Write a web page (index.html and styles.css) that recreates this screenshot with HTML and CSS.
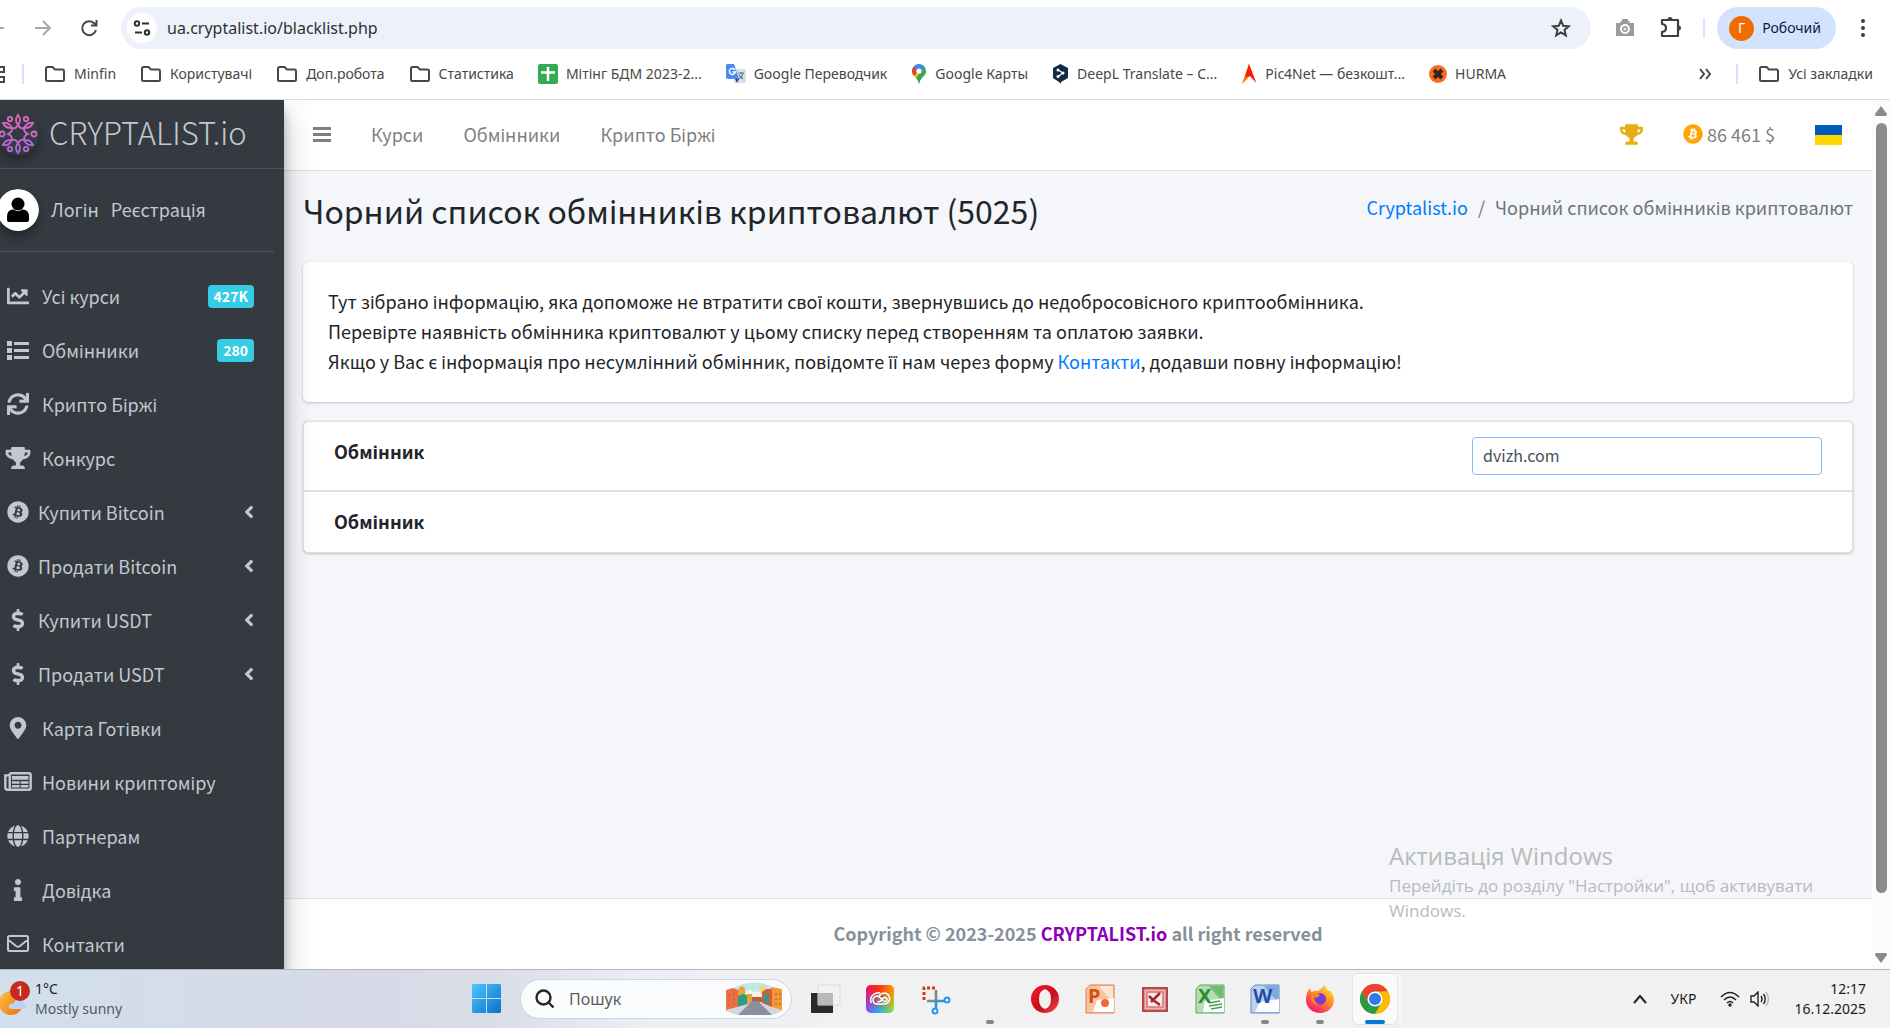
FILE: index.html
```
<!DOCTYPE html>
<html lang="uk">
<head>
<meta charset="utf-8">
<title>Чорний список обмінників криптовалют</title>
<link rel="stylesheet" href="styles.css">
</head>
<body>

<!-- shared icons -->
<svg class="sprite" aria-hidden="true">
	<symbol id="i-folder" viewBox="0 0 22 18"><path d="M2 3.500Q2 2 3.500 2H8.500L11 4.500H18.500Q20 4.500 20 6V14.500Q20 16 18.500 16H3.500Q2 16 2 14.500Z" fill="none" stroke="#474747" stroke-width="2"/></symbol>
	<symbol id="i-trophy" viewBox="0 0 576 512"><path d="M552 64H448V24c0-13.300-10.700-24-24-24H152c-13.300 0-24 10.700-24 24v40H24C10.700 64 0 74.700 0 88v56c0 35.700 22.500 72.400 61.900 100.700 31.500 22.700 69.800 37.100 110 41.700C203.300 338.500 240 360 240 360v72h-48c-35.300 0-64 20.700-64 56v12c0 6.600 5.400 12 12 12h296c6.600 0 12-5.400 12-12v-12c0-35.300-28.700-56-64-56h-48v-72s36.700-21.500 68.100-73.600c40.300-4.600 78.600-19 110-41.700 39.300-28.300 61.900-65 61.900-100.700V88c0-13.300-10.700-24-24-24zM99.300 192.800C74.900 175.200 64 155.600 64 144v-16h64.200c1 32.600 5.800 61.200 12.800 86.200-15.100-5.200-29.200-12.400-41.700-21.400zM512 144c0 16.100-17.700 36.100-35.300 48.800-12.500 9-26.700 16.200-41.800 21.400 7-25 11.800-53.600 12.800-86.200H512v16z"/></symbol>
	<symbol id="i-bitcoin" viewBox="0 0 512 512"><path d="M504 256c0 136.967-111.033 248-248 248S8 392.967 8 256 119.033 8 256 8s248 111.033 248 248zm-141.651-35.330c4.937-32.999-20.191-50.739-54.550-62.573l11.146-44.702-27.213-6.781-10.851 43.524c-7.154-1.783-14.502-3.464-21.803-5.130l10.929-43.810-27.198-6.781-11.153 44.686c-5.922-1.349-11.735-2.682-17.377-4.084l.031-.140-37.530-9.370-7.239 29.062s20.191 4.627 19.765 4.913c11.022 2.751 13.014 10.044 12.680 15.825l-12.696 50.925c.760.194 1.744.473 2.829.907-.907-.225-1.876-.473-2.876-.713l-17.796 71.338c-1.349 3.348-4.767 8.370-12.471 6.464.271.395-19.780-4.937-19.780-4.937l-13.510 31.147 35.414 8.827c6.588 1.651 13.045 3.379 19.400 5.006l-11.262 45.213 27.182 6.781 11.153-44.733a1038.209 1038.209 0 0 0 21.687 5.627l-11.115 44.523 27.213 6.781 11.262-45.128c46.404 8.781 81.299 5.239 95.986-36.727 11.834-33.790-.589-53.281-25.004-65.991 17.780-4.098 31.174-15.792 34.747-39.949zm-62.177 87.179c-8.410 33.790-65.308 15.523-83.755 10.943l14.944-59.899c18.446 4.603 77.600 13.717 68.811 48.956zm8.417-87.667c-7.673 30.736-55.031 15.120-70.393 11.292l13.548-54.327c15.363 3.828 64.836 10.973 56.845 43.035z"/></symbol>
	<symbol id="i-dollar" viewBox="0 0 288 512"><path d="M209.200 233.400l-108-31.600C88.700 198.200 80 186.500 80 173.500c0-16.300 13.200-29.500 29.500-29.500h66.300c12.200 0 24.200 3.700 34.200 10.500 6.100 4.100 14.300 3.100 19.500-2l34.800-34c7.100-6.900 6.100-18.400-1.800-24.500C238 74.800 207.400 64.100 176 64V16c0-8.800-7.200-16-16-16h-32c-8.800 0-16 7.200-16 16v48h-2.500C45.800 64-5.400 118.700.5 183.600c4.200 46.100 39.400 83.600 83.800 96.600l102.500 30c12.500 3.700 21.200 15.300 21.200 28.300 0 16.300-13.200 29.500-29.500 29.500h-66.300C100 368 88 364.300 78 357.500c-6.100-4.100-14.300-3.100-19.500 2l-34.800 34c-7.100 6.900-6.100 18.400 1.800 24.500 24.500 19.200 55.100 29.900 86.500 30v48c0 8.800 7.200 16 16 16h32c8.800 0 16-7.200 16-16v-48.200c46.600-.9 90.300-28.600 105.700-72.700 21.500-61.600-14.600-124.800-72.500-141.700z"/></symbol>
	<symbol id="i-left" viewBox="0 0 256 512"><path d="M31.700 239l136-136c9.400-9.400 24.600-9.400 33.900 0l22.600 22.600c9.400 9.400 9.400 24.600 0 33.900L127.900 256l96.400 96.400c9.400 9.400 9.400 24.600 0 33.900L201.700 409c-9.400 9.400-24.600 9.400-33.900 0l-136-136c-9.500-9.400-9.500-24.600-.1-34z"/></symbol>
</svg>

<!-- browser -->
<header class="browser">
	<div class="toolbar">
		<button class="tool back" aria-label="Назад"><svg width="22" height="22" viewBox="0 0 22 22" fill="none" stroke="#a8a8a8" stroke-width="2"><path d="M20 11H4M11 4L4 11L11 18"/></svg></button>
		<button class="tool" aria-label="Вперед"><svg width="22" height="22" viewBox="0 0 22 22" fill="none" stroke="#a8a8a8" stroke-width="2"><path d="M3 11H18M11 4L18 11L11 18"/></svg></button>
		<button class="tool reload" aria-label="Оновити"><svg width="22" height="22" viewBox="0 0 22 22" fill="none" stroke="#474747" stroke-width="2"><path d="M18 13A7 7 0 1 1 16.500 6.500L18 8M18.500 3V8.500H13"/></svg></button>
		<div class="omnibox">
			<button class="site-info" aria-label="Відомості про сайт"><svg width="18" height="18" viewBox="0 0 18 18" fill="none" stroke="#303030" stroke-width="2"><circle cx="4" cy="4.500" r="2.200"/><path d="M9 4.500H16M2 13.500H9"/><circle cx="14" cy="13.500" r="2.200"/></svg></button>
			<input class="url" type="text" aria-label="Адреса" value="ua.cryptalist.io/blacklist.php">
			<button class="tool star" aria-label="Закладка"><svg width="20" height="20" viewBox="0 0 20 20" fill="none" stroke="#404040" stroke-width="2"><path d="M10 2.500L12.200 7.700L17.800 8.200L13.500 11.900L14.800 17.400L10 14.500L5.200 17.400L6.500 11.900L2.200 8.200L7.800 7.700Z"/></svg></button>
		</div>
		<button class="tool" aria-label="Знімок"><svg width="20" height="20" viewBox="0 0 20 20"><path d="M1 5H5L6 3H7V1H13V3H14L15 5H19V18H1Z" fill="#9b9b9b"/><circle cx="10" cy="11" r="4" fill="none" stroke="#fff" stroke-width="2"/><circle cx="10" cy="11" r="1.500" fill="#eee"/></svg></button>
		<button class="tool puzzle" aria-label="Розширення"><svg width="24" height="24" viewBox="0 0 24 24"><path d="M3 4H19V20H3V16Q7 15.500 7 12Q7 8.500 3 8Z" fill="none" stroke="#404040" stroke-width="2.200" stroke-linejoin="round"/><path d="M8.500 3.500A2.500 2.500 0 0 1 13.500 3.500ZM19.500 9.500A2.500 2.500 0 0 1 19.500 14.500Z" fill="#404040"/></svg></button>
		<span class="divider"></span>
		<button class="profile"><span class="profile-pic">Г</span>Робочий</button>
		<button class="tool" aria-label="Меню"><svg width="6" height="20" viewBox="0 0 6 20" fill="#404040"><circle cx="3" cy="3" r="2"/><circle cx="3" cy="10" r="2"/><circle cx="3" cy="17" r="2"/></svg></button>
	</div>
	<nav class="bookmarks">
		<a href="#" class="apps" aria-label="Сервіси"><svg width="20" height="20" viewBox="0 0 20 20" fill="none" stroke="#474747" stroke-width="2"><path d="M2 3H7V8H2ZM13 3H18V8H13ZM2 13H7V18H2ZM13 13H18V18H13Z"/></svg></a>
		<span class="divider"></span>
		<a href="#"><svg width="22" height="18"><use href="#i-folder"/></svg><span>Minfin</span></a>
		<a href="#"><svg width="22" height="18"><use href="#i-folder"/></svg><span>Користувачі</span></a>
		<a href="#"><svg width="22" height="18"><use href="#i-folder"/></svg><span>Доп.робота</span></a>
		<a href="#"><svg width="22" height="18"><use href="#i-folder"/></svg><span>Статистика</span></a>
		<a href="#"><svg width="20" height="20" viewBox="0 0 20 20"><rect width="20" height="20" rx="2" fill="#34a853"/><path d="M10 3V17M3 8.500H17" stroke="#fff" stroke-width="2.500"/></svg><span>Мітінг БДМ 2023-2...</span></a>
		<a href="#"><svg width="20" height="20" viewBox="0 0 20 20"><rect x="8" y="5" width="12" height="14" rx="1" fill="#dcdfe3"/><path d="M12 9H18M15 8V10M17 9Q16 14 12 15M13 11L17 15" stroke="#607d8b" stroke-width="1.200" fill="none"/><path d="M1 0H8L13 15H2Q0 15 0 13V1Z" fill="#4c8bf5"/><path d="M9 15H13L11 19Z" fill="#3c3fa8"/><path d="M9 6A3 3 0 1 0 9.300 8H6.500" stroke="#fff" stroke-width="1.400" fill="none"/></svg><span>Google Переводчик</span></a>
		<a href="#"><svg width="16" height="20" viewBox="0 0 16 20"><path d="M8 0A7 7 0 0 1 15 7C15 12 9 13 8 20C7 13 1 12 1 7A7 7 0 0 1 8 0Z" fill="#34a853"/><path d="M1 7A7 7 0 0 1 3 2.500L8 7L3 12Q1 10 1 7Z" fill="#ea4335"/><path d="M3 12L12 3L15 6Q15 9 12 12L8 14L5 14Z" fill="#fbbc04"/><path d="M3 2.500A7 7 0 0 1 14 4L8 10Z" fill="#4285f4"/><path d="M15 7C15 12 9 13 8 20Q7 15 5 14L13 4Z" fill="#34a853"/><circle cx="8" cy="7" r="2.600" fill="#fff"/></svg><span>Google Карты</span></a>
		<a href="#"><svg width="17" height="20" viewBox="0 0 17 20"><path d="M8.500 0L16 4V14L9 18V20L7 18L1 14V4Z" fill="#0f2b46"/><path d="M6 6L11 9L6 12.500" stroke="#fff" stroke-width="1.300" fill="none"/><circle cx="6" cy="6" r="1.500" fill="#fff"/><circle cx="11" cy="9" r="1.500" fill="#fff"/><circle cx="6" cy="12.500" r="1.500" fill="#fff"/></svg><span>DeepL Translate – C...</span></a>
		<a href="#"><svg width="16" height="20" viewBox="0 0 16 20"><path d="M8 0L5 14L1 20Z" fill="#ff8a00"/><path d="M8 0L15 19L9 12L1 20Z" fill="#ff7a10"/><path d="M8 0L15 18L9 12L4 13Z" fill="#f61b0c"/></svg><span>Pic4Net — безкошт...</span></a>
		<a href="#"><svg width="18" height="18" viewBox="0 0 18 18"><circle cx="9" cy="9" r="9" fill="#fb6b1d"/><path d="M5 5L13 13M13 5L5 13" stroke="#33261f" stroke-width="4"/></svg><span>HURMA</span></a>
		<button class="tool more" aria-label="Більше закладок"><svg width="14" height="14" viewBox="0 0 14 14" fill="none" stroke="#474747" stroke-width="2"><path d="M2 2L6 7L2 12M8 2L12 7L8 12"/></svg></button>
		<span class="divider"></span>
		<a href="#"><svg width="22" height="18"><use href="#i-folder"/></svg><span>Усі закладки</span></a>
	</nav>
</header>

<!-- site -->
<div class="site">
	<aside class="sidebar">
		<a href="#" class="brand">
			<svg width="42" height="42" viewBox="-21 -21 42 42" fill="none" stroke-width="1.800">
				<defs>
					<linearGradient id="pink" gradientUnits="userSpaceOnUse" x1="0" y1="-20" x2="0" y2="20"><stop offset="0" stop-color="#e868b8"/><stop offset="1" stop-color="#a66be0"/></linearGradient>
				</defs>
				<g stroke="url(#pink)">
					<path d="M0 -19Q4 -14 0 -9Q-4 -14 0 -19ZM0 19Q4 14 0 9Q-4 14 0 19ZM15 -11Q12 -5 6.400 -6.400Q9 -12 15 -11ZM-15 -11Q-12 -5 -6.400 -6.400Q-9 -12 -15 -11ZM15 11Q12 5 6.400 6.400Q9 12 15 11ZM-15 11Q-12 5 -6.400 6.400Q-9 12 -15 11Z"/>
					<path d="M0 -9Q3 -4 6.400 -6.400Q5 -2 10 0Q5 2 6.400 6.400Q3 4 0 9Q-3 4 -6.400 6.400Q-5 2 -10 0Q-5 -2 -6.400 -6.400Q-3 -4 0 -9"/>
					<circle cx="16" cy="0" r="2.500"/><circle cx="-16" cy="0" r="2.500"/><circle cx="8" cy="-15" r="2.200"/><circle cx="-8" cy="-15" r="2.200"/><circle cx="8" cy="15" r="2.200"/><circle cx="-8" cy="15" r="2.200"/>
				</g>
			</svg>
			<span>CRYPTALIST.io</span>
		</a>
		<div class="user">
			<svg class="avatar" width="42" height="42" viewBox="0 0 42 42"><circle cx="21" cy="21" r="21" fill="#fff"/><circle cx="21" cy="15" r="6.500"/><path d="M10 28Q10 20 17 20.500Q21 24 25 20.500Q32 20 32 28V31Q32 33 30 33H12Q10 33 10 31Z"/></svg>
			<a href="#">Логін</a>
			<a href="#">Реєстрація</a>
		</div>
		<nav class="menu">
			<a href="#"><svg class="icon" viewBox="0 0 512 512"><path d="M496 384H64V80c0-8.840-7.160-16-16-16H16C7.160 64 0 71.160 0 80v336c0 17.670 14.330 32 32 32h464c8.840 0 16-7.160 16-16v-32c0-8.840-7.160-16-16-16zM464 96H345.940c-21.380 0-32.090 25.850-16.970 40.970l32.400 32.400L288 242.750l-73.370-73.370c-12.500-12.500-32.760-12.500-45.250 0l-68.690 68.690c-6.250 6.250-6.250 16.380 0 22.630l22.620 22.620c6.250 6.250 16.380 6.250 22.630 0L192 237.250l73.370 73.370c12.500 12.500 32.760 12.500 45.250 0l96-96 32.400 32.400c15.120 15.120 40.970 4.410 40.970-16.970V112c.01-8.840-7.150-16-15.990-16z"/></svg><span>Усі курси</span><b class="badge">427K</b></a>
			<a href="#"><svg class="icon" viewBox="0 0 22 22"><path d="M0 2h5v5H0zM0 9h5v5H0zM0 16h5v5H0zM7 3h15v3H7zM7 10h15v3H7zM7 17h15v3H7z"/></svg><span>Обмінники</span><b class="badge">280</b></a>
			<a href="#"><svg class="icon" viewBox="0 0 512 512"><path d="M440.650 12.570l4 82.770A247.160 247.160 0 0 0 255.830 8C134.730 8 33.910 94.920 12.290 209.820A12 12 0 0 0 24.090 224h49.050a12 12 0 0 0 11.670-9.260 175.910 175.910 0 0 1 317-56.940l-101.460-4.860a12 12 0 0 0-12.570 12v47.410a12 12 0 0 0 12 12H500a12 12 0 0 0 12-12V12a12 12 0 0 0-12-12h-47.370a12 12 0 0 0-11.980 12.570zM255.830 432a175.610 175.610 0 0 1-146-77.800l101.800 4.870a12 12 0 0 0 12.570-12v-47.400a12 12 0 0 0-12-12H12a12 12 0 0 0-12 12V500a12 12 0 0 0 12 12h47.350a12 12 0 0 0 12-12.600l-4.150-82.570A247.170 247.170 0 0 0 255.830 504c121.110 0 221.930-86.920 243.550-201.820a12 12 0 0 0-11.800-14.180h-49.050a12 12 0 0 0-11.670 9.260A175.860 175.860 0 0 1 255.830 432z"/></svg><span>Крипто Біржі</span></a>
			<a href="#"><svg class="icon wide"><use href="#i-trophy"/></svg><span>Конкурс</span></a>
			<a href="#" class="tree"><svg class="icon"><use href="#i-bitcoin"/></svg><span>Купити Bitcoin</span><svg class="arrow"><use href="#i-left"/></svg></a>
			<a href="#" class="tree"><svg class="icon"><use href="#i-bitcoin"/></svg><span>Продати Bitcoin</span><svg class="arrow"><use href="#i-left"/></svg></a>
			<a href="#" class="tree"><svg class="icon"><use href="#i-dollar"/></svg><span>Купити USDT</span><svg class="arrow"><use href="#i-left"/></svg></a>
			<a href="#" class="tree"><svg class="icon"><use href="#i-dollar"/></svg><span>Продати USDT</span><svg class="arrow"><use href="#i-left"/></svg></a>
			<a href="#"><svg class="icon" viewBox="0 0 384 512"><path d="M172.268 501.670C26.970 291.031 0 269.413 0 192 0 85.961 85.961 0 192 0s192 85.961 192 192c0 77.413-26.970 99.031-172.268 309.670-9.535 13.774-29.930 13.773-39.464 0zM192 272c44.183 0 80-35.817 80-80s-35.817-80-80-80-80 35.817-80 80 35.817 80 80 80z"/></svg><span>Карта Готівки</span></a>
			<a href="#"><svg class="icon wide" viewBox="0 0 25 20"><path d="M5 2H22.500Q24 2 24 3.500V15.500Q24 17 22.500 17H3Q1 17 1 15V4H5M5 2V16" fill="none" stroke="#c2c7d0" stroke-width="2.200"/><path d="M7 4.500h15v3.500H7zM7 9.300h7v2.200H7zM15 9.300H22v2.200h-7zM7 12.800h7v2.200H7zM15 12.800H22v2.200h-7z"/></svg><span>Новини криптоміру</span></a>
			<a href="#"><svg class="icon" viewBox="0 0 496 512"><path d="M336.500 160C322 70.700 287.800 8 248 8s-74 62.700-88.500 152h177zM152 256c0 22.200 1.200 43.500 3.300 64h185.300c2.100-20.500 3.300-41.800 3.300-64s-1.200-43.500-3.300-64H155.300c-2.100 20.500-3.300 41.800-3.300 64zm324.700-96c-28.600-67.900-86.500-120.400-158-141.600 24.400 33.800 41.200 84.700 50 141.600h108zM177.200 18.400C105.800 39.600 47.800 92.100 19.300 160h108c8.700-56.900 25.500-107.800 49.900-141.600zM487.400 192H372.700c2.100 21 3.300 42.500 3.300 64s-1.200 43-3.300 64h114.600c5.500-20.500 8.600-41.800 8.600-64s-3.100-43.500-8.500-64zM120 256c0-21.500 1.200-43 3.300-64H8.600C3.200 212.500 0 233.800 0 256s3.200 43.500 8.600 64h114.600c-2-21-3.200-42.500-3.200-64zm39.500 96c14.500 89.300 48.700 152 88.500 152s74-62.700 88.500-152h-177zm159.300 141.600c71.400-21.200 129.400-73.700 158-141.600h-108c-8.800 56.900-25.600 107.800-50 141.600zM19.300 352c28.600 67.900 86.500 120.400 158 141.600-24.400-33.800-41.200-84.700-50-141.600h-108z"/></svg><span>Партнерам</span></a>
			<a href="#"><svg class="icon" viewBox="0 0 192 512"><path d="M20 424.229h20V279.771H20c-11.046 0-20-8.954-20-20V212c0-11.046 8.954-20 20-20h112c11.046 0 20 8.954 20 20v212.229h20c11.046 0 20 8.954 20 20V492c0 11.046-8.954 20-20 20H20c-11.046 0-20-8.954-20-20v-47.771c0-11.046 8.954-20 20-20zM96 0C56.235 0 24 32.235 24 72s32.235 72 72 72 72-32.235 72-72S135.764 0 96 0z"/></svg><span>Довідка</span></a>
			<a href="#"><svg class="icon" viewBox="0 0 22 22"><path d="M2.500 3H19.500Q21 3 21 4.500V16.500Q21 18 19.500 18H2.500Q1 18 1 16.500V4.500Q1 3 2.500 3ZM1 6.500L9 13Q11 14.500 13 13L21 6.500" fill="none" stroke="#c2c7d0" stroke-width="2"/></svg><span>Контакти</span></a>
		</nav>
	</aside>

	<div class="page">
		<nav class="topnav">
			<button class="burger" aria-label="Меню"><svg width="18" height="16" viewBox="0 0 18 16" fill="#7f7f7f"><path d="M0 0H18V3H0ZM0 6H18V9H0ZM0 12H18V15H0Z"/></svg></button>
			<a href="#">Курси</a>
			<a href="#">Обмінники</a>
			<a href="#">Крипто Біржі</a>
			<a href="#" class="cup" aria-label="Конкурс"><svg width="23" height="21" fill="#e6ae12"><use href="#i-trophy"/></svg></a>
			<a href="#" class="price"><svg width="20" height="20" fill="#ffa500"><use href="#i-bitcoin"/></svg>86 461 $</a>
			<a href="#" class="flag" aria-label="Українська"></a>
		</nav>
		<main class="content">
			<div class="heading">
				<h1>Чорний список обмінників криптовалют (5025)</h1>
				<div class="crumbs"><a href="#">Cryptalist.io</a><span class="slash">/</span><span>Чорний список обмінників криптовалют</span></div>
			</div>
			<div class="card intro">
				<p>Тут зібрано інформацію, яка допоможе не втратити свої кошти, звернувшись до недобросовісного криптообмінника.<br>
				Перевірте наявність обмінника криптовалют у цьому списку перед створенням та оплатою заявки.<br>
				Якщо у Вас є інформація про несумлінний обмінник, повідомте її нам через форму <a href="#">Контакти</a>, додавши повну інформацію!</p>
			</div>
			<table class="card list">
				<thead>
					<tr><th>Обмінник</th><td><input class="search" type="text" aria-label="Пошук обмінника" value="dvizh.com"></td></tr>
				</thead>
				<tfoot>
					<tr><th colspan="2">Обмінник</th></tr>
				</tfoot>
			</table>
		</main>
		<footer class="footer">Copyright © 2023-2025 <a href="#">CRYPTALIST.io</a> all right reserved</footer>
		<div class="watermark">
			<div class="watermark-title">Активація Windows</div>
			Перейдіть до розділу "Настройки", щоб активувати Windows.
		</div>
	</div>

	<div class="scrollbar">
		<svg width="12" height="10" viewBox="0 0 12 10" fill="#8b8b8b"><path d="M6 0L12 8Q12 10 11 10H1Q0 10 0 8Z"/></svg>
		<div class="thumb"></div>
		<svg width="12" height="10" viewBox="0 0 12 10" fill="#8b8b8b"><path d="M6 10L12 2Q12 0 11 0H1Q0 0 0 2Z"/></svg>
	</div>
</div>

<!-- taskbar -->
<footer class="taskbar">
	<div class="weather">
		<svg width="30" height="36" viewBox="0 0 30 36"><defs><linearGradient id="sun" x1="0" y1="0" x2="1" y2="1"><stop offset="0" stop-color="#f9c43b"/><stop offset="1" stop-color="#ee6f16"/></linearGradient></defs><circle cx="11" cy="22" r="12" fill="url(#sun)"/><path d="M12 28Q8 28 9 24.500Q10 22 13 23Q15 18 20 19Q24 20 24 23Q27 24 26 26.500Q25 28 23 28Z" fill="#b8d4f8"/><circle cx="20" cy="10" r="10" fill="#c42b1c"/><text x="20" y="15" text-anchor="middle" class="count">1</text></svg>
		<div>1°C<small>Mostly sunny</small></div>
	</div>
	<div class="dock">
		<button aria-label="Пуск"><svg width="30" height="30" viewBox="0 0 30 30"><defs><linearGradient id="win" x1="0" y1="0" x2="1" y2="1"><stop offset="0" stop-color="#4cc9fb"/><stop offset="1" stop-color="#0670cc"/></linearGradient></defs><path d="M1 0H14V14H0V1ZM15 0H28L29 1V14H15ZM0 15H14V29H1L0 28ZM15 15H29V28L28 29H15Z" fill="url(#win)"/></svg></button>
		<label class="find">
			<svg width="20" height="20" viewBox="0 0 20 20" fill="none" stroke="#262626" stroke-width="2.400"><circle cx="8.500" cy="8.500" r="7"/><path d="M13.500 13.500L18.500 18.500"/></svg>
			<input type="text" placeholder="Пошук">
			<svg width="56" height="34" viewBox="0 0 56 34"><ellipse cx="28" cy="16" rx="26" ry="15.500" fill="#bfe9e6"/><circle cx="36" cy="6" r="3" fill="#ffd65c"/><path d="M18 14Q22 5 27 10Q34 8 36 14V20H18Z" fill="#fff3ea"/><path d="M0 8L7 6L12 8V26L0 29Z" fill="#ea6f43"/><path d="M12 8L15 4L19 6V24L12 26Z" fill="#efa036"/><path d="M12 14L17 12L21 13V23L12 25Z" fill="#2f9c86"/><path d="M21 12H26V21L21 23Z" fill="#e3a53e"/><path d="M26 15H38V20H26Z" fill="#b75f40"/><path d="M56 7L46 5L43 8V25L56 29Z" fill="#f3993a"/><path d="M46 7H40L36 10V21L46 25Z" fill="#d75b3c"/><path d="M38 12H43V22L38 20Z" fill="#2f9c86"/><path d="M3 12V24M8 11V24M50 11V24M54 11V25" stroke="#c65a38" stroke-width="1.200" stroke-dasharray="2 3"/><path d="M0 28L22 22L16 33Q5 33 0 28ZM56 28L36 22L44 33Q52 32 56 28Z" fill="#d3d6e0"/><path d="M26 19H32L46 33H12Z" fill="#8d8ea0"/></svg>
		</label>
		<button aria-label="Подання завдань"><svg width="32" height="32" viewBox="0 0 32 32"><path d="M2 10H24V30H2Z" fill="#2b2b2b"/><path d="M9 2H31V22H9Z" fill="#f1f1f1" stroke="#ddd"/><path d="M9 10H24V22H9Z" fill="#b9b9b9"/></svg></button>
		<button aria-label="Creative Cloud"><svg width="30" height="30" viewBox="0 0 30 30"><defs><linearGradient id="ccTop" x1="0" y1="0" x2="1" y2="0"><stop offset="0" stop-color="#f0146e"/><stop offset=".4" stop-color="#fb2a10"/><stop offset="1" stop-color="#ff9a00"/></linearGradient><linearGradient id="ccLow" x1="0" y1="0" x2="1" y2="0"><stop offset="0" stop-color="#7c4dff"/><stop offset=".5" stop-color="#2bb4e8"/><stop offset="1" stop-color="#9be02d"/></linearGradient><linearGradient id="fade" x1="0" y1="0" x2="0" y2="1"><stop offset=".2" stop-color="#fff"/><stop offset=".9" stop-color="#000"/></linearGradient><mask id="m"><rect width="30" height="30" fill="url(#fade)"/></mask></defs><rect x="1" y="1" width="28" height="28" rx="5" fill="url(#ccLow)"/><rect x="1" y="1" width="28" height="28" rx="5" fill="url(#ccTop)" mask="url(#m)"/><path d="M18 16.500L14.500 13A4 4 0 1 0 11 20H19A5.500 5.500 0 1 0 14.500 11.500M13 17.500Q15 18.500 17 15.500Q20 11.500 22 15Q22 18 19 17.500" fill="none" stroke="#fff" stroke-width="1.600" stroke-linecap="round"/><path d="M6.500 19Q4 14 8.500 10.500Q12 8 15 9" fill="none" stroke="#fff" stroke-width="1.500"/></svg></button>
		<button aria-label="Ножиці"><svg width="32" height="32" viewBox="0 0 32 32" fill="none"><path d="M5 17V5H17" stroke="#d13c0d" stroke-width="3" stroke-dasharray="3 2"/><path d="M17 7V24M8 18H25" stroke="#7f8790" stroke-width="2.600"/><path d="M17 18V25M18 18H26" stroke="#1c9be8" stroke-width="2.200"/><circle cx="28" cy="17" r="2.500" stroke="#1c9be8" stroke-width="2"/><circle cx="16" cy="28" r="2.500" stroke="#1c9be8" stroke-width="2"/></svg></button>
		<button class="running" aria-label="Застосунок"></button>
		<button aria-label="Opera"><svg width="30" height="30" viewBox="0 0 30 30"><defs><linearGradient id="opera" x1="0" y1="0" x2="1" y2="1"><stop offset="0" stop-color="#ff1b2d"/><stop offset=".55" stop-color="#c40c1c"/><stop offset="1" stop-color="#ff4a4a"/></linearGradient></defs><path fill-rule="evenodd" d="M15 1A14 14 0 1 1 15 29A14 14 0 1 1 15 1ZM15 5Q9 7 9 15Q9 23 15 25Q21 23 21 15Q21 7 15 5Z" fill="url(#opera)"/></svg></button>
		<button class="office ppt" aria-label="PowerPoint"><svg width="30" height="30" viewBox="0 0 30 30"><path d="M5 1H29V29H1V5Z" fill="#f6c4a3" stroke="#dc7d4c"/><path d="M14 2H28V18Q20 10 14 2Z" fill="#fbe5d6"/><path d="M12 16L29 14V28H8Z" fill="#fff"/><circle cx="20" cy="19" r="4" fill="#ee6a3a"/></svg><b>P</b></button>
		<button aria-label="Picture Manager"><svg width="30" height="30" viewBox="0 0 30 30"><rect x="2" y="3" width="26" height="25" fill="#b9464a"/><rect x="5" y="6" width="20" height="19" fill="#d9898a" stroke="#f7dcdc"/><rect x="8" y="9" width="14" height="13" fill="#fbecec"/><path d="M9 12L13 16M20 9L11 18M13 16L20 21" stroke="#a2262c" stroke-width="2.500"/></svg></button>
		<button class="office xls" aria-label="Excel"><svg width="30" height="30" viewBox="0 0 30 30"><path d="M5 1H29V29H1V5Z" fill="#b5ddb3" stroke="#61a866"/><path d="M14 2H28V18Q20 10 14 2Z" fill="#6fbf72"/><path d="M10 17L29 14V28H8Z" fill="#fff"/><path d="M14 19L25 17M14 22L27 20M16 25L27 23" stroke="#4a9f4d" stroke-width="1.500"/></svg><b>X</b></button>
		<button class="office doc running" aria-label="Word"><svg width="30" height="30" viewBox="0 0 30 30"><path d="M5 1H29V29H1V5Z" fill="#bcd2ee" stroke="#5b87c4"/><path d="M14 2H28V18Q20 10 14 2Z" fill="#7fa9dd"/><path d="M10 18L29 15V28H5Z" fill="#fff"/></svg><b>W</b></button>
		<button class="running" aria-label="Firefox"><svg width="30" height="30" viewBox="0 0 30 30"><defs><linearGradient id="ff" x1="1" y1="0" x2=".3" y2="1"><stop offset="0" stop-color="#fff04a"/><stop offset=".45" stop-color="#ff9a20"/><stop offset="1" stop-color="#f4156c"/></linearGradient></defs><path d="M19 1Q22 4 23 7Q25 7 25 6Q29 12 29 16A14 13 0 0 1 1 16Q1 8 5 4Q5 7 7 8Q10 6 12 7Q17 5 19 1Z" fill="url(#ff)"/><circle cx="15" cy="15" r="6" fill="#7a3cd8"/><path d="M7 10Q12 8 15 11Q12 15 9 13Q9 19 15 21Q8 21 6 16Z" fill="#ff8a1c"/></svg></button>
		<button class="active" aria-label="Chrome"><svg width="30" height="30" viewBox="0 0 30 30"><circle cx="15" cy="15" r="15" fill="#fbbc05"/><path d="M15 15L8.500 18.700L2 7.500A15 15 0 0 1 28 7.500H15Z" fill="#ea4335"/><path d="M2 7.500L8.500 18.700L21.500 18.700L15 30A15 15 0 0 1 2 7.500Z" fill="#2b9a46"/><path d="M28 7.500A15 15 0 0 1 15 30L22 18V7.500Z" fill="#fbbc05"/><circle cx="15" cy="15" r="7.500" fill="#fff"/><circle cx="15" cy="15" r="6" fill="#2f7bec"/></svg></button>
	</div>
	<div class="tray">
		<svg width="14" height="10" viewBox="0 0 14 10" fill="none" stroke="#222" stroke-width="2"><path d="M1 9L7 2L13 9"/></svg>
		<span>УКР</span>
		<div class="net">
			<svg width="20" height="16" viewBox="0 0 20 16" fill="none" stroke="#222" stroke-width="1.500"><path d="M1 6Q10 -3 19 6M4 9Q10 3 16 9M7 12Q10 9 13 12"/><circle cx="10" cy="14" r="1" fill="#222"/></svg>
			<svg width="20" height="16" viewBox="0 0 20 16" fill="none" stroke="#222" stroke-width="1.400"><path d="M1 5H4L8 1V15L4 11H1ZM11 5Q13 8 11 11M13.500 3Q17 8 13.500 13"/><path d="M16 1Q21 8 16 15" stroke="#bbb"/></svg>
		</div>
		<div class="clock">12:17<br>16.12.2025</div>
	</div>
</footer>
</body>
</html>
```
FILE: styles.css
```
* {box-sizing:border-box;}
body {
	margin:0;
	height:100vh;
	display:flex;
	flex-direction:column;
	overflow:hidden;
	background:#fff;
	color:#212529;
	font:14px/20px "Noto Sans", "Open Sans", sans-serif;}
a {color:#007bff; text-decoration:none;}
button {
	margin:0;
	padding:0;
	border:0;
	background:none;
	font:inherit;
	color:inherit;}
input {font:inherit; color:inherit; border:0; outline:0; min-width:0;}
svg {display:block; flex:none;}
.sprite {position:absolute; width:0; height:0;}

/* browser */
.browser {flex:none; border-bottom:1px solid #dcdfe2;}
.toolbar {
	display:flex;
	align-items:center;
	gap:24px;
	height:56px;
	padding:0 24px 0 0;}
.tool {flex:none;}
.toolbar .back {margin-left:-16px;}
.toolbar .reload {margin:0 -3px 0 0;}
.toolbar .back + .tool {margin:0 0 0 2px;}
.omnibox {
	flex:1;
	display:flex;
	align-items:center;
	height:42px;
	padding:0 20px 0 6px;
	border-radius:21px;
	background:#ecf1fa;}
.site-info {
	width:30px;
	height:30px;
	padding:6px;
	border-radius:50%;
	background:#fff;}
.url {
	flex:1;
	margin-left:10px;
	padding:0;
	background:none;
	font-size:16px;
	color:#303030;}
.divider {
	flex:none;
	width:2px;
	height:20px;
	background:#d3e2fd;}
.puzzle + .divider {margin:0 -12px 0 -4px;}
.profile {
	flex:none;
	display:flex;
	align-items:center;
	gap:8px;
	height:42px;
	padding:0 15px 0 12px;
	border-radius:21px;
	background:#d3e3fd;
	color:#041e49;}
.profile-pic {
	width:25px;
	height:25px;
	border-radius:50%;
	background:#ef6c00;
	color:#fff;
	line-height:24px;}
.bookmarks {
	display:flex;
	align-items:center;
	height:43px;
	padding:0 17px 8px 0;
	gap:24px;}
.bookmarks a {
	display:flex;
	align-items:center;
	gap:8px;
	color:#474747;
	white-space:nowrap;}
.bookmarks .apps {margin:0 -8px 0 -14px;}
.bookmarks .divider + a {margin-left:-4px;}
.bookmarks .more {margin-left:auto;}

/* site */
.site {
	flex:1;
	display:flex;
	min-height:0;
	overflow:hidden;
	font:18px/30px "Noto Sans CJK SC", "Noto Sans", sans-serif;}
.sidebar {
	flex:none;
	width:284px;
	z-index:2;
	background:#343a40;
	overflow:hidden;
	box-shadow:0 14px 28px rgba(0,0,0,.25), 0 10px 10px rgba(0,0,0,.22);}
.sidebar a {color:#c2c7d0;}
.brand {
	display:flex;
	align-items:center;
	gap:10px;
	height:69px;
	margin-left:-3px;
	border-bottom:1px solid #4b545c;
	font-size:31px;
	font-weight:300;}
.brand span {padding-bottom:4px;}
.brand svg, .avatar {
	border-radius:50%;
	box-shadow:0 6px 10px rgba(0,0,0,.3);}
.user {
	display:flex;
	align-items:center;
	gap:12px;
	height:83px;
	margin:0 10px 0 -3px;
	border-bottom:1px solid #4f5962;}
.user a {padding-bottom:2px;}
.menu {padding-top:17px;}
.menu a {
	display:flex;
	align-items:center;
	height:54px;
	padding:0 30px 0 4px;
	gap:10px;}
.menu .tree {gap:6px;}
.icon {
	width:28px;
	height:22px;
	fill:#c2c7d0;}
.badge {
	margin-left:auto;
	padding:0 6px;
	border-radius:4px;
	background:#36cce4;
	color:#fff;
	font-size:14px;
	line-height:23px;}
.arrow {
	width:10px;
	height:20px;
	margin-left:auto;
	fill:#c2c7d0;}
.page {
	flex:1;
	position:relative;
	display:flex;
	flex-direction:column;
	background:#f4f6f9;}
.topnav {
	display:flex;
	align-items:center;
	height:71px;
	padding:0 30px 0 29px;
	gap:40px;
	border-bottom:1px solid #dee2e6;
	background:#fff;}
.topnav a {padding-bottom:2px; color:#7f7f7f;}
.topnav .cup {margin-left:auto;}
.price {display:flex; align-items:center; gap:4px;}
.flag {
	width:27px;
	height:20px;
	background:linear-gradient(#005bbb 50%, #ffd500 50%);}
.content {flex:1; padding:17px 19px 0;}
.heading {
	display:flex;
	justify-content:space-between;
	margin-bottom:30px;}
h1 {
	margin:0;
	font-size:32px;
	line-height:44px;
	font-weight:400;}
.crumbs {padding-top:4px; color:#6c757d;}
.slash {padding:0 10px;}
.card {
	border-radius:5px;
	background:#fff;
	box-shadow:0 0 1px rgba(0,0,0,.13), 0 1px 3px rgba(0,0,0,.2);}
.intro {margin-bottom:19px; padding:24px 25px 26px;}
.intro p {margin:0;}
.list {
	width:100%;
	border:1px solid #dee2e6;
	border-spacing:0;}
.list th, .list td {padding:14px 30px 16px; text-align:left; vertical-align:top;}
.list td {padding:15px 30px;}
.list thead th, .list thead td {border-bottom:2px solid #dee2e6;}
.search {
	display:block;
	width:350px;
	height:38px;
	margin-left:auto;
	padding:0 10px 2px;
	border:1px solid #80bdff;
	border-radius:4px;
	font-size:16px;
	color:#495057;}
.footer {
	padding:19px 20px 21px;
	border-top:1px solid #dee2e6;
	background:#fff;
	color:#869099;
	font-weight:700;
	text-align:center;}
.footer a {color:#8b00b5;}

/* activation notice floats over the page */
.watermark {
	position:absolute;
	right:49px;
	bottom:46px;
	width:434px;
	color:#b9babc;
	font:17px/25px "Open Sans", "Noto Sans", sans-serif;}
.watermark-title {font-size:24px; line-height:34px;}
.scrollbar {
	flex:none;
	display:flex;
	flex-direction:column;
	align-items:center;
	width:18px;
	padding:6px 0;
	gap:7px;
	background:#fcfcfc;}
.thumb {
	flex:1;
	width:11px;
	margin-bottom:53px;
	border-radius:6px;
	background:#8b8b8b;}

/* taskbar */
.taskbar {
	flex:none;
	display:grid;
	grid-template-columns:1fr auto 1fr;
	align-items:center;
	height:59px;
	border-top:1px solid #b5b5b8;
	background:linear-gradient(90deg, #d2dfec, #d5dae6 18%, #d9dde8 26%, #eaeff6 34%, #f1f1f1 46%);
	color:#1b1b1b;}
.weather {display:flex; gap:5px; align-items:center;}
.weather small {display:block; font-size:14px; color:#555a60;}
.count {font-size:14px; fill:#fff;}
.dock {display:flex; align-items:center; gap:11px; padding-right:28px;}
.dock button {
	position:relative;
	display:grid;
	place-items:center;
	width:44px;
	height:50px;
	border-radius:5px;}
.find {
	display:flex;
	align-items:center;
	gap:14px;
	width:272px;
	height:40px;
	padding:0 9px 0 14px;
	border:1px solid #d3d5da;
	border-radius:20px;
	background:#fafbfd;}
.find input {flex:1; padding:0; background:none; font-size:16px;}
.find input::placeholder {color:#5d5d5d; opacity:1;}
.running::after, .active::after {
	content:"";
	position:absolute;
	bottom:0;
	left:18px;
	width:8px;
	height:4px;
	border-radius:2px;
	background:#868686;}
.dock .active {background:#fafafa; box-shadow:0 0 0 1px #e4e4e4, 5px 0 0 #f6f6f6;}
.active::after {left:12px; width:20px; background:#0078d4;}
.office b {
	position:absolute;
	left:10px;
	top:10px;
	font-size:20px;
	line-height:24px;}
.ppt b {color:#d5500c;}
.xls b {color:#2e8b2f;}
.doc b {color:#1c4fa8;}
.tray {
	display:flex;
	justify-content:flex-end;
	align-items:center;
	gap:24px;
	padding-right:24px;}
.net {display:flex; gap:10px;}
.clock {text-align:right;}
```
